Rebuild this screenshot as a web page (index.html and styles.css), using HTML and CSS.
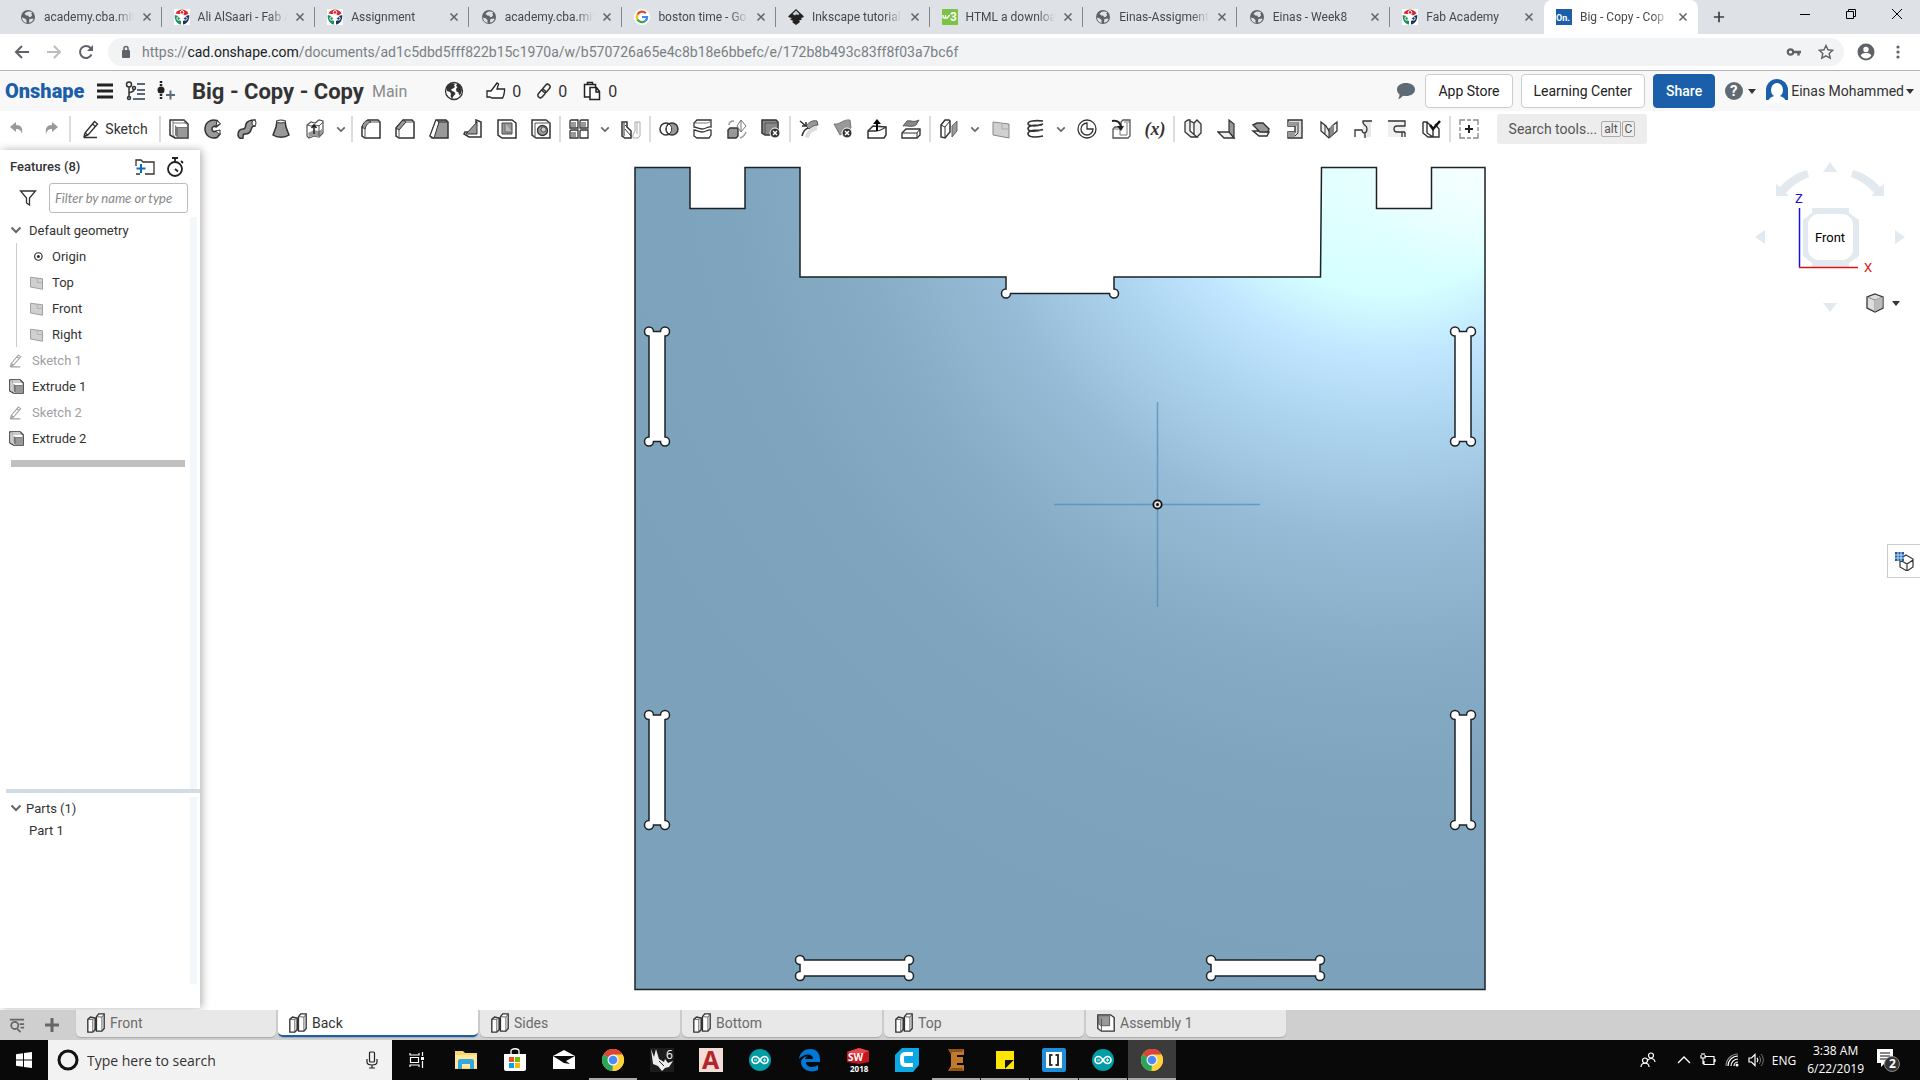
FILE: index.html
```html
<!DOCTYPE html>
<html lang="en">
<head>
    <meta charset="UTF-8">
    <meta name="viewport" content="width=device-width, initial-scale=1.0">
    <title>Big - Copy - Copy</title>
    <link rel="stylesheet" href="styles.css">
</head>
<body>
    <!-- shared icons -->
    <svg class="sprite" aria-hidden="true">
        <symbol id="i-globe" viewBox="0 0 16 16">
            <circle cx="8" cy="8" r="7" fill="#5f6368"/>
            <path d="M8.500 2.500c-2 .3-3.500 1.300-4 2.500l2 1.500 2 .2.500 1.500 2-.5 1.200-1.800-1-1.500 1-1.200c-1-.6-2.300-.9-3.700-.7zM2 8.500l3 1 1.500 1.500v3C4 13.500 2 11.500 2 8.500zM9.500 10l3-.5 1 .8c-.6 1.500-2 3-4 3.500l-.5-1.500z" fill="#dee1e6"/>
        </symbol>
        <symbol id="i-fab" viewBox="0 0 16 16">
            <rect width="16" height="16" fill="#fff"/>
            <path d="M1.500 4.500C3 1.500 6 .5 8 .5s5 1 6.500 4L11 6.500A3.500 3.500 0 0 0 8 5L4.500 5z" fill="#d9232e"/>
            <path d="M.8 6l3.400 1c-.3 3 .8 4 2.800 5v3.500C3 15 .2 11 .8 6z" fill="#1d8f5a"/>
            <path d="M15.200 6l-3.400 1c.3 3-.8 4-2.800 5v3.500c4-.5 6.800-4.500 6.200-9.500z" fill="#17375e"/>
            <circle cx="8" cy="3.400" r="1.800" fill="#d9232e" stroke="#fff"/>
            <circle cx="4.600" cy="9.500" r="1.700" fill="#1d8f5a" stroke="#fff"/>
            <circle cx="11.400" cy="9.500" r="1.700" fill="#17375e" stroke="#fff"/>
        </symbol>
        <symbol id="i-close" viewBox="0 0 10 10"><path d="M1.500 1.500l7 7M8.500 1.500l-7 7" stroke="#5f6368" stroke-width="1.500"/></symbol>
        <symbol id="i-chev" viewBox="0 0 12 8"><path d="M1.500 1.500L6 6l4.500-4.500" fill="none" stroke="#666" stroke-width="2"/></symbol>
        <symbol id="i-caret" viewBox="0 0 8 5"><path d="M0 0h8L4 5z" fill="#333"/></symbol>
        <symbol id="i-sketch" viewBox="0 0 20 20"><path d="M3 14L12.500 2.500l3 2.500L6 16l-4 1.500zM10.500 5l3 2.500M3 14l3 2M2 18.500h13" fill="none" stroke="currentColor" stroke-width="1.400"/></symbol>
        <symbol id="i-extrude" viewBox="0 0 20 20">
            <path d="M1 1h14l4 4v14H6l-5-3z" fill="#fff" stroke="#333" stroke-width="1.500"/>
            <path d="M4 1.500v14L6 18M4 4h12M15 1l1 3 3 2" fill="none" stroke="#777"/>
            <path d="M8 8l-2-2v10l2 2h10V8z" fill="#777"/><path d="M9 9h9v9H9z" fill="#999"/>
        </symbol>
        <symbol id="i-part" viewBox="0 0 22 22">
            <path d="M2 7l3-2.500 5 1v13L7.500 21H2zM11.500 4l2.500-3h6v16l-2.500 3h-6z" fill="#fff" stroke="#333" stroke-width="1.500"/>
            <path d="M2 7h5.500V21M7.500 7L10 5.500M11.500 4l6 .5V20M17.500 4.500L20 1" fill="none" stroke="#555"/>
        </symbol>
        <symbol id="i-plane" viewBox="0 0 20 20"><path d="M2 3l16 2v14L2 16z" fill="#d0d0d0" stroke="#888"/><path d="M11 4v6h7" fill="none" stroke="#aaa"/></symbol>
        <symbol id="i-chrome" viewBox="0 0 24 24">
            <circle cx="12" cy="12" r="11" fill="#fdd13a"/>
            <path d="M12 12L2.470 6.500A11 11 0 0 1 21.530 6.500z" fill="#db4437"/>
            <path d="M12 12L2.470 6.500A11 11 0 0 0 11.500 23z" fill="#2aa65a"/>
            <path d="M12 6.500h9.530A11 11 0 0 1 11.500 23l5-8.500z" fill="#fdd13a"/>
            <circle cx="12" cy="12" r="5.500" fill="#f4f4f4"/><circle cx="12" cy="12" r="4.300" fill="#4c8bf5"/>
        </symbol>
        <symbol id="i-arduino" viewBox="0 0 24 24">
            <circle cx="12" cy="12" r="11" fill="#009da5"/>
            <path d="M12 12c-2-3-3-3.500-4.500-3.500a3.500 3.500 0 0 0 0 7c1.500 0 2.500-.5 4.500-3.500s3-3.500 4.500-3.500a3.500 3.500 0 0 1 0 7c-1.500 0-2.500-.5-4.500-3.500z" fill="none" stroke="#fff" stroke-width="1.600"/>
            <path d="M6 12h3M15 12h3M16.500 10.500v3" stroke="#fff"/>
        </symbol>
    </svg>

    <!-- browser tabs -->
    <div class="tab-strip">
        <div class="tab"><svg class="favicon"><use href="#i-globe"/></svg><a href="#">academy.cba.mit.</a><button aria-label="Close tab"><svg><use href="#i-close"/></svg></button></div>
        <div class="tab"><svg class="favicon"><use href="#i-fab"/></svg><a href="#">Ali AlSaari - Fab A</a><button aria-label="Close tab"><svg><use href="#i-close"/></svg></button></div>
        <div class="tab"><svg class="favicon"><use href="#i-fab"/></svg><a href="#">Assignment</a><button aria-label="Close tab"><svg><use href="#i-close"/></svg></button></div>
        <div class="tab"><svg class="favicon"><use href="#i-globe"/></svg><a href="#">academy.cba.mit.</a><button aria-label="Close tab"><svg><use href="#i-close"/></svg></button></div>
        <div class="tab">
            <svg class="favicon" viewBox="0 0 16 16"><circle cx="8" cy="8" r="8" fill="#fff"/><g fill="none" stroke-width="2.200"><path d="M11.800 4.200A5.200 5.200 0 0 0 3.500 5.400" stroke="#ea4335"/><path d="M3.500 5.400a5.200 5.200 0 0 0 0 5.200" stroke="#fbbc05"/><path d="M3.500 10.600a5.200 5.200 0 0 0 8 1.200" stroke="#34a853"/><path d="M11.500 11.800A5 5 0 0 0 13.100 8H8" stroke="#4285f4"/></g></svg>
            <a href="#">boston time - Go</a><button aria-label="Close tab"><svg><use href="#i-close"/></svg></button>
        </div>
        <div class="tab">
            <svg class="favicon" viewBox="0 0 16 16"><path d="M8 0l7.500 7c.8 1-.5 1.700-2.500 2l1 1.500-3 1 1 1.500-4 3-4-3 1.500-1-3.500-1.500L4 9C1 8.800-.2 8 .5 7z" fill="#222"/><path d="M8 1.500l3.500 3.500-1.500 1-1.500-.8L7 6.500 4.500 5z" fill="#ccc"/></svg>
            <a href="#">Inkscape tutorial</a><button aria-label="Close tab"><svg><use href="#i-close"/></svg></button>
        </div>
        <div class="tab">
            <svg class="favicon" viewBox="0 0 16 16"><rect width="16" height="16" rx="1" fill="#7cc243"/><path d="M1 6v2c0 1.500 2.500 1.500 2.500 0V6v2c0 1.500 2.500 1.500 2.500 0 0-1 1-1.500 2-1.500" fill="none" stroke="#fff" stroke-width="1.300"/><text x="8" y="12" font-size="12" font-weight="bold" fill="#fff">3</text></svg>
            <a href="#">HTML a downloa</a><button aria-label="Close tab"><svg><use href="#i-close"/></svg></button>
        </div>
        <div class="tab"><svg class="favicon"><use href="#i-globe"/></svg><a href="#">Einas-Assigment</a><button aria-label="Close tab"><svg><use href="#i-close"/></svg></button></div>
        <div class="tab"><svg class="favicon"><use href="#i-globe"/></svg><a href="#">Einas - Week8</a><button aria-label="Close tab"><svg><use href="#i-close"/></svg></button></div>
        <div class="tab last"><svg class="favicon"><use href="#i-fab"/></svg><a href="#">Fab Academy</a><button aria-label="Close tab"><svg><use href="#i-close"/></svg></button></div>
        <div class="tab active">
            <svg class="favicon" viewBox="0 0 16 16"><rect width="16" height="16" fill="#1b5faa"/><text x="0" y="12" font-size="9" font-weight="bold" fill="#fff">On.</text></svg>
            <a href="#">Big - Copy - Cop</a><button aria-label="Close tab"><svg><use href="#i-close"/></svg></button>
        </div>
        <button class="new-tab" aria-label="New tab"><svg viewBox="0 0 14 14"><path d="M7 1v12M1 7h12" stroke="#3c4043" stroke-width="2"/></svg></button>
        <div class="window-controls">
            <button aria-label="Minimize"><svg viewBox="0 0 12 12"><path d="M1 6.500h10" stroke="#000"/></svg></button>
            <button aria-label="Restore"><svg viewBox="0 0 12 12"><path d="M1.500 3.500h7v7h-7zM3.500 3.500v-2h7v7h-2" fill="none" stroke="#000"/></svg></button>
            <button aria-label="Close"><svg viewBox="0 0 12 12"><path d="M1 1l10 10M11 1L1 11" stroke="#000"/></svg></button>
        </div>
    </div>

    <!-- address bar -->
    <div class="address-bar">
        <button aria-label="Back"><svg viewBox="0 0 16 16"><path d="M15 8H2M8 2L2 8l6 6" fill="none" stroke="#5f6368" stroke-width="2"/></svg></button>
        <button aria-label="Forward"><svg viewBox="0 0 16 16"><path d="M1 8h13M8 2l6 6-6 6" fill="none" stroke="#bdbdbd" stroke-width="2"/></svg></button>
        <button aria-label="Reload"><svg viewBox="0 0 16 16"><path d="M13.500 10.500A6 6 0 1 1 12.500 4" fill="none" stroke="#5f6368" stroke-width="2"/><path d="M15 1v6H9z" fill="#5f6368"/></svg></button>
        <div class="omnibox">
            <svg class="lock" viewBox="0 0 10 14"><rect x="1" y="5" width="8" height="8" rx="1" fill="#5f6368"/><path d="M3 6V3.500a2 2 0 0 1 4 0V6" fill="none" stroke="#5f6368" stroke-width="1.500"/></svg>
            <a class="url" href="#">https://<b>cad.onshape.com</b>/documents/ad1c5dbd5fff822b15c1970a/w/b570726a65e4c8b18e6bbefc/e/172b8b493c83ff8f03a7bc6f</a>
            <button aria-label="Passwords"><svg viewBox="0 0 16 16"><circle cx="4.500" cy="8" r="2.700" fill="none" stroke="#5f6368" stroke-width="2.200"/><path d="M7 8h8M12.500 8v3.500" stroke="#5f6368" stroke-width="2.500"/></svg></button>
            <button aria-label="Bookmark"><svg viewBox="0 0 16 16"><path d="M8 1.500l2 4.300 4.700.5-3.500 3.200 1 4.700L8 11.800l-4.200 2.400 1-4.700L1.300 6.300 6 5.800z" fill="none" stroke="#5f6368" stroke-width="1.400"/></svg></button>
        </div>
        <button aria-label="Profile"><svg class="profile" viewBox="0 0 18 18"><circle cx="9" cy="9" r="8.500" fill="#5f6368"/><circle cx="9" cy="6.500" r="2.700" fill="#fff"/><path d="M3.700 12.500c1-2 3-2.500 5.300-2.500s4.300.5 5.300 2.500C13 14.500 11 15.500 9 15.500s-4-1-5.300-3z" fill="#fff"/></svg></button>
        <button aria-label="Menu"><svg viewBox="0 0 16 16"><circle cx="8" cy="3" r="1.600" fill="#5f6368"/><circle cx="8" cy="8" r="1.600" fill="#5f6368"/><circle cx="8" cy="13" r="1.600" fill="#5f6368"/></svg></button>
    </div>

    <!-- document header -->
    <header class="doc-header">
        <a class="logo" href="#">Onshape</a>
        <button class="menu" aria-label="Menu"><svg viewBox="0 0 16 16"><path d="M0 2h16M0 8h16M0 14h16" stroke="#222" stroke-width="3"/></svg></button>
        <button aria-label="Versions"><svg viewBox="0 0 20 20"><g fill="none" stroke="#333" stroke-width="1.500"><circle cx="4" cy="3.500" r="2.500"/><path d="M4 6v10.500M4 13c0-3 5-1 5-4.500"/><circle cx="9" cy="7" r="1.500"/><circle cx="4" cy="17" r="1.500"/></g><path d="M12 3h8M12 9h8M12 13h8M8 18h12" stroke="#5b6a78" stroke-width="2"/></svg></button>
        <button aria-label="Insert version"><svg viewBox="0 0 20 20"><path d="M5 0v2M5 3v2M5 13v2M5 16v2" stroke="#222" stroke-width="2.500"/><circle cx="5" cy="9" r="3.500" fill="#222"/><path d="M10 14h9M14.500 9.500v9" stroke="#5b6a78" stroke-width="2"/></svg></button>
        <h1>Big - Copy - Copy</h1>
        <span class="branch">Main</span>
        <div class="stats">
            <svg viewBox="0 0 20 20"><circle cx="10" cy="10" r="8.500" fill="#fff" stroke="#333" stroke-width="1.300"/><path d="M8 2L4 3.500 2 7l1 3 3 1 1 2-.5 2L8 18l1.500-3 2-2-1-2-2.500-1-1-1.500 2-1L11 6l-1-1.500L11 3zM13 3l-1 2 1.500 1-1.500 2 .5 2.500 2 1 .5 3 2-2 1-4-1-3-2-2.500z" fill="#333"/></svg>
            <button><svg viewBox="0 0 20 20"><path d="M1 10h4l6-8 1.500 1L11 8h7.500v2l-.5 3-.5 2-1 2H6l-2-1H1z" fill="#fff" stroke="#222" stroke-width="1.300"/></svg>0</button>
            <button class="link-stat"><svg viewBox="0 0 16 16"><g fill="none" stroke="#333" stroke-width="1.500" transform="rotate(-50 8 8)"><rect x="0" y="5.500" width="9" height="5" rx="2.500"/><rect x="7" y="5.500" width="9" height="5" rx="2.500"/></g></svg>0</button>
            <button><svg viewBox="0 0 18 20"><path d="M7 16H1.500V3.500h11V6M4.500 3.500v-2h5v2M7 6.500h6.500l3 4v8H7zM13 7v4h3.500" fill="#fff" stroke="#222" stroke-width="1.500"/></svg>0</button>
        </div>
        <div class="header-right">
            <button class="icon-only" aria-label="Comments"><svg viewBox="0 0 20 20"><path d="M10 2c5 0 9 2.500 9 6.500S15 15 10 15c-1 0-2-.1-3-.3C5.500 16.500 3.500 18 2 18c1-1 1.500-3 1.500-4.500C2 12.300 1 10.500 1 8.500 1 4.500 5 2 10 2z" fill="#5f6b74"/></svg></button>
            <button class="btn">App Store</button>
            <button class="btn">Learning Center</button>
            <button class="btn primary">Share</button>
            <button class="icon-only" aria-label="Help"><svg viewBox="0 0 20 20"><circle cx="10" cy="10" r="9" fill="#5f6b74"/><text x="6" y="15" font-size="15" font-weight="bold" fill="#fff">?</text></svg><svg class="caret"><use href="#i-caret"/></svg></button>
            <button class="user"><svg viewBox="0 0 24 24"><path d="M1 21V11a11 11 0 0 1 22 0v10z" fill="#1b5faa"/><ellipse cx="12" cy="11" rx="6" ry="7" fill="#fff"/><path d="M3 24c0-5 4-6 6-7h6c2 1 6 2 6 7z" fill="#fff"/></svg>Einas Mohammed<svg class="caret"><use href="#i-caret"/></svg></button>
        </div>
    </header>

    <!-- feature toolbar -->
    <div class="toolbar">
        <button aria-label="Undo"><svg viewBox="0 0 20 20"><path d="M3 8l6-5v3c5 0 7 3 6 9-1-4-3-5-6-5v3z" fill="#999"/></svg></button>
        <button aria-label="Redo"><svg viewBox="0 0 20 20"><path d="M17 8l-6-5v3c-5 0-7 3-6 9 1-4 3-5 6-5v3z" fill="#999"/></svg></button>
        <span class="sep"></span>
        <button class="sketch"><svg><use href="#i-sketch"/></svg>Sketch</button>
        <span class="sep"></span>
        <button aria-label="Extrude"><svg><use href="#i-extrude"/></svg></button>
        <button aria-label="Revolve"><svg viewBox="0 0 20 20"><path d="M17 5l-3-3.500C7-.5 2 4 2 10s5 10.500 12 8.500l3-3.500-4-3c-2 1.500-4 0-4-2s2-3.500 4-2z" fill="#999" stroke="#333" stroke-width="1.500"/><path d="M14 2l-1 5 4-2M13 12l4-1v4" fill="#fff" stroke="#333"/></svg></button>
        <button aria-label="Sweep"><svg viewBox="0 0 20 20"><path d="M1 16c0-5 2-6 5-6 3 0 2-2 3-5s4-4 9-4v6c-3 0-3 1-4 4s-3 4-6 4c-2 0-2 1-2 4-2 1-5 0-5-3z" fill="#999" stroke="#333" stroke-width="1.500"/><ellipse cx="17" cy="4" rx="2" ry="3" fill="#fff" stroke="#333"/></svg></button>
        <button aria-label="Loft"><svg viewBox="0 0 20 20"><path d="M6 2h8l1 6 3 8c-4 3-12 3-16 0l3-8z" fill="#999" stroke="#333" stroke-width="1.500"/><ellipse cx="10" cy="2.500" rx="4" ry="1.500" fill="#fff" stroke="#333"/></svg></button>
        <button aria-label="Thicken"><svg viewBox="0 0 20 20"><path d="M2 6l4-3 4 1 4-3 4 1v12l-4 4-5-1-5 2-2-2z" fill="#fff" stroke="#555" stroke-width="1.200"/><path d="M3 14l6-3 5 1 3-2v4l-3 4-5-1-5 1z" fill="#999"/><path d="M14 6v11M2 6l4 1 4-1 4 1 4-4" fill="none" stroke="#555"/><path d="M9 6v9M6.500 9L9 6l2.500 3" fill="none" stroke="#222" stroke-width="1.500"/></svg></button>
        <button class="drop" aria-label="More"><svg><use href="#i-chev"/></svg></button>
        <span class="sep"></span>
        <button aria-label="Fillet"><svg viewBox="0 0 20 20"><path d="M1 8l6-7h10l2 2v16H4l-3-2z" fill="#fff" stroke="#333" stroke-width="1.500"/><path d="M1 8c1-4 3-6 6-7l3 2C6 4 5 7 4 10z" fill="#999" stroke="#333"/><path d="M4 9v10M9 3h10" stroke="#555"/></svg></button>
        <button aria-label="Chamfer"><svg viewBox="0 0 20 20"><path d="M1 9l7-8h9l2 2v16H4l-3-2z" fill="#fff" stroke="#333" stroke-width="1.500"/><path d="M1 9l7-8 3 2-7 8z" fill="#999" stroke="#333"/><path d="M4 10v9M10 3h9" stroke="#555"/></svg></button>
        <button aria-label="Draft"><svg viewBox="0 0 20 20"><path d="M7 1h10l2 2v16H3l-2-2z" fill="#999" stroke="#333" stroke-width="1.500"/><path d="M7 1l3 2-5 16-4-2z" fill="#fff" stroke="#333"/><path d="M9 3h9" stroke="#333"/></svg></button>
        <button aria-label="Rib"><svg viewBox="0 0 20 20"><path d="M13 1l5 2v15H6l-5-3 1-2h11z" fill="#fff" stroke="#333" stroke-width="1.500"/><path d="M14 3L3 15h11z" fill="#999" stroke="#333"/></svg></button>
        <button aria-label="Shell"><svg viewBox="0 0 20 20"><path d="M1 1h14l4 3v15H5l-4-3z" fill="#fff" stroke="#333" stroke-width="1.500"/><path d="M5 4h10v11H5z" fill="#999" stroke="#444"/><path d="M8 4v9h7" stroke="#666" fill="#bbb"/></svg></button>
        <button aria-label="Hole"><svg viewBox="0 0 20 20"><path d="M1 1h14l4 3v15H5l-4-3z" fill="#fff" stroke="#333" stroke-width="1.500"/><path d="M4 19V4h15" fill="none" stroke="#555"/><circle cx="11.500" cy="11.500" r="5" fill="#999" stroke="#333" stroke-width="1.300"/><circle cx="12.500" cy="10.500" r="2.500" fill="#ccc" stroke="#555"/></svg></button>
        <span class="sep"></span>
        <button aria-label="Pattern"><svg viewBox="0 0 20 20"><g fill="#fff" stroke="#333" stroke-width="1.300"><path d="M1 2l1-1h7v8H1zM11 2l1-1h7v8h-8zM1 12l1-1h7v8H1zM11 12l1-1h7v8h-8z"/></g><path d="M2 3h5v5H2zM12 3h5v5h-5zM2 13h5v5H2z" fill="#999"/></svg></button>
        <button class="drop" aria-label="More"><svg><use href="#i-chev"/></svg></button>
        <button aria-label="Mirror"><svg viewBox="0 0 20 20"><path d="M1 3h5v5l4 4v7H4l-3-2z" fill="#fff" stroke="#333" stroke-width="1.500"/><path d="M3 4v13M6 8l-2-2M4 10l6 7" fill="none" stroke="#333"/><path d="M19 3h-5v9l-2 3v4h5l2-2zM16 3v12" fill="#fff" stroke="#aaa"/></svg></button>
        <span class="sep"></span>
        <button aria-label="Boolean"><svg viewBox="0 0 20 20"><circle cx="7" cy="10" r="6" fill="#fff" stroke="#333" stroke-width="1.500"/><circle cx="13" cy="10" r="6" fill="#999" stroke="#333" stroke-width="1.500"/><path d="M10 5a6 6 0 0 1 0 10 6 6 0 0 1 0-10z" fill="#fff" stroke="#333"/></svg></button>
        <button aria-label="Split"><svg viewBox="0 0 20 20"><path d="M1 4l3-3h14v7c-3-1-5 2-9 2-4 0-5-2-8-2zM1 11c3 0 4 2 8 2s6-3 9-2v5l-2 3H4l-3-2z" fill="#fff" stroke="#333" stroke-width="1.300"/><path d="M2 4h13l3-2" fill="none" stroke="#777"/></svg></button>
        <button aria-label="Transform"><svg viewBox="0 0 20 20"><path d="M1 11l2-2h8v8l-2 2H1z" fill="#999" stroke="#333" stroke-width="1.400"/><path d="M14 1l5 6-5 6-4-6zM14 1v12" fill="#fff" stroke="#777"/><path d="M2 6c0-3 2-4 5-4M19 13c-1 3-3 5-6 6" fill="none" stroke="#999" stroke-width="1.500"/></svg></button>
        <button aria-label="Delete part"><svg viewBox="0 0 20 20"><path d="M1 1h14l2 2v13H4l-3-2z" fill="#888" stroke="#333" stroke-width="1.500"/><path d="M4 16V4h13" fill="none" stroke="#555"/><circle cx="14" cy="14" r="5" fill="#333" stroke="#fff"/><path d="M12 12l4 4M16 12l-4 4" stroke="#fff" stroke-width="1.500"/></svg></button>
        <span class="sep"></span>
        <button aria-label="Modify fillet"><svg viewBox="0 0 20 20"><path d="M6 18c1-6 5-10 12-11v4c-4 1-7 3-8 8z" fill="#ddd"/><path d="M7 7c3-4 7-6 11-5l1 4c-4 0-7 2-9 4z" fill="#999" stroke="#555"/><path d="M1 2l6 5M7 3v4H3M3 17c1-4 3-7 6-8" fill="none" stroke="#333" stroke-width="1.500"/></svg></button>
        <button aria-label="Delete face"><svg viewBox="0 0 20 20"><path d="M1 5c6 1 9-5 16-4l1 8-11 7z" fill="#999" stroke="#777"/><circle cx="14" cy="14" r="5" fill="#333" stroke="#fff"/><path d="M12 12l4 4M16 12l-4 4" stroke="#fff" stroke-width="1.500"/></svg></button>
        <button aria-label="Move face"><svg viewBox="0 0 20 20"><path d="M1 12l5-5 13 1v8l-2 3H1z" fill="#fff" stroke="#333" stroke-width="1.500"/><path d="M1 12h8c4 0 7-2 10-4" fill="none" stroke="#333" stroke-width="1.300"/><path d="M10 12V4" stroke="#000" stroke-width="2"/><path d="M6 5l4-5 4 5z"/></svg></button>
        <button aria-label="Replace face"><svg viewBox="0 0 20 20"><path d="M1 14l4-4h14v6l-3 3H1z" fill="#fff" stroke="#333" stroke-width="1.400"/><path d="M1 14h15l3-4M16 14v5" fill="none" stroke="#333"/><path d="M2 7l4-5c4-1 6 2 12-1l-3 5c-5 3-9 0-13 1z" fill="#888" stroke="#555"/></svg></button>
        <span class="sep"></span>
        <button aria-label="Offset surface"><svg viewBox="0 0 20 20"><path d="M2 6l4-5h4l1 1v11l-5 6-4-1z" fill="#fff" stroke="#333" stroke-width="1.500"/><path d="M6 8v11M6 8l5-6M2 6l4 2" stroke="#333"/><path d="M13 7l5-5v10l-5 6z" fill="#999" stroke="#666"/></svg></button>
        <button class="drop" aria-label="More"><svg><use href="#i-chev"/></svg></button>
        <button aria-label="Plane"><svg><use href="#i-plane"/></svg></button>
        <button aria-label="Helix"><svg viewBox="0 0 20 20"><path d="M18 2C10 1 3 2 3 4.500S10 8 18 5M17 6C10 6 3 6 3 9.500s8 3.500 15 1M17 11c-7 0-14 0-14 3.500S9 19 18 17" fill="none" stroke="#333" stroke-width="1.600"/></svg></button>
        <button class="drop" aria-label="More"><svg><use href="#i-chev"/></svg></button>
        <button aria-label="Curve"><svg viewBox="0 0 20 20"><circle cx="10" cy="10" r="9" fill="#fff" stroke="#333" stroke-width="1.300"/><path d="M10 4v6h6a6 6 0 1 1-6-6z" fill="none" stroke="#333" stroke-width="1.300"/></svg></button>
        <button aria-label="Derived"><svg viewBox="0 0 20 20"><path d="M2 10l2-2h6V3l2-2h7v16l-2 2H2z" fill="#fff" stroke="#555" stroke-width="1.300"/><path d="M2 10h7v6h7M13 3h6M16 16V4" fill="none" stroke="#777"/><path d="M1 2c5-1 8 1 9 6" fill="none" stroke="#222" stroke-width="2"/><path d="M6 7h7l-3 5z" fill="#222"/></svg></button>
        <button class="variable" aria-label="Variable">(x)</button>
        <span class="sep"></span>
        <button aria-label="Sheet metal"><svg viewBox="0 0 20 20"><path d="M2 3l3-2h2v11l7 6H8l-6-5zM7 2l4 2v11M11 4l3-3 4 4v9l-4 4" fill="#eee" stroke="#333" stroke-width="1.300"/></svg></button>
        <button aria-label="Flange"><svg viewBox="0 0 20 20"><path d="M12 1l5 4v14l-5-4z" fill="#999" stroke="#333" stroke-width="1.200"/><path d="M1 13h11l5 6H7z" fill="#eee" stroke="#333" stroke-width="1.400"/></svg></button>
        <button aria-label="Hem"><svg viewBox="0 0 20 20"><path d="M2 12h7l9 1-2 4H8z" fill="#eee" stroke="#333" stroke-width="1.400"/><path d="M2 6l4-2h6l6 6-1 3H9z" fill="#999" stroke="#333" stroke-width="1.400"/></svg></button>
        <button aria-label="Tab"><svg viewBox="0 0 20 20"><path d="M3 1h14v18H3v-6h7V7H3z" fill="#ddd" stroke="#333" stroke-width="1.400"/><path d="M3 3h9v4H3zM3 13h7v5H3z" fill="#999"/><path d="M13 3v11l-3 3" fill="none" stroke="#333"/></svg></button>
        <button aria-label="Bend"><svg viewBox="0 0 20 20"><path d="M2 3l5 4 3 5 3-5 5-4v9l-8 7-8-7z" fill="#eee" stroke="#333" stroke-width="1.300"/><path d="M10 9l5-4v9l-5 5z" fill="#888"/><path d="M6 6v9M10 9v10" stroke="#333"/></svg></button>
        <button aria-label="Corner"><svg viewBox="0 0 20 20"><path d="M10 2h8v16h-8z" fill="#e8e8e8"/><path d="M2 18v-7h7c0 4 5 4 5-1s-5-3-4-8h9M12 14v5" fill="none" stroke="#333" stroke-width="1.300"/></svg></button>
        <button aria-label="Bend relief"><svg viewBox="0 0 20 20"><path d="M1 1h17v17H1z" fill="#f0f0f0"/><path d="M1 2h17v5h-8c-4 0-4 6 0 6h5v5M18 13v5M14 13h4" fill="none" stroke="#333" stroke-width="1.300"/></svg></button>
        <button aria-label="Finish sheet metal"><svg viewBox="0 0 20 20"><path d="M2 3h4v11l6 4M2 3v11l5 4h11V10l-4-5M6 3l6 6v9" fill="none" stroke="#333" stroke-width="1.400"/><path d="M9 6l3 4 7-8" fill="none" stroke="#111" stroke-width="2.500"/></svg></button>
        <span class="sep"></span>
        <button aria-label="Add custom features"><svg viewBox="0 0 20 20"><path d="M1 6V1h5M8 1h4M14 1h5v5M19 8v4M19 14v5h-5M12 19H8M6 19H1v-5M1 12V8" fill="none" stroke="#888" stroke-width="1.300"/><path d="M10 6v8M6 10h8" stroke="#222" stroke-width="2"/></svg></button>
        <button class="search-tools">Search tools... <span class="keys"><kbd>alt</kbd><kbd>C</kbd></span></button>
    </div>

    <main class="workspace">
        <aside class="sidebar">
            <section class="features">
                <div class="panel-head">
                    <h2>Features (8)</h2>
                    <button aria-label="New folder"><svg viewBox="0 0 20 16"><path d="M1 7V1h5l2 2h11v12h-9M1 15h4" fill="none" stroke="#333" stroke-width="1.300"/><path d="M6 5v9M1.500 9.500h9" stroke="#0b6cbf" stroke-width="2"/></svg></button>
                    <button aria-label="Rebuild time"><svg viewBox="0 0 18 20"><circle cx="9" cy="12" r="7" fill="none" stroke="#222" stroke-width="1.800"/><path d="M6 1h6M9 1v4M15 4l2 2M9 12l3 2.500" stroke="#222" stroke-width="1.800"/></svg></button>
                </div>
                <div class="filter">
                    <svg viewBox="0 0 18 18"><path d="M1.500 2h15l-6 7v7l-3-2V9z" fill="none" stroke="#333" stroke-width="1.300"/></svg>
                    <input type="text" aria-label="Filter" placeholder="Filter by name or type">
                </div>
                <div class="scroll">
                    <button class="group-head"><svg><use href="#i-chev"/></svg>Default geometry</button>
                    <ul class="geometry">
                        <li><svg viewBox="0 0 16 16"><circle cx="10" cy="8" r="4" fill="none" stroke="#333" stroke-width="1.300"/><circle cx="10" cy="8" r="1.600" fill="#333"/></svg>Origin</li>
                        <li><svg><use href="#i-plane"/></svg>Top</li>
                        <li><svg><use href="#i-plane"/></svg>Front</li>
                        <li><svg><use href="#i-plane"/></svg>Right</li>
                    </ul>
                    <ul class="feature-list">
                        <li class="muted"><svg><use href="#i-sketch"/></svg>Sketch 1</li>
                        <li><svg><use href="#i-extrude"/></svg>Extrude 1</li>
                        <li class="muted"><svg><use href="#i-sketch"/></svg>Sketch 2</li>
                        <li><svg><use href="#i-extrude"/></svg>Extrude 2</li>
                    </ul>
                    <div class="rollback"></div>
                </div>
            </section>
            <section class="parts">
                <div class="scroll">
                    <button class="group-head"><svg><use href="#i-chev"/></svg>Parts (1)</button>
                    <p>Part 1</p>
                </div>
            </section>
        </aside>

        <div class="viewport">
            <svg class="model" viewBox="200 150 1720 860">
                <defs>
                    <radialGradient id="shade" gradientUnits="userSpaceOnUse" cx="1388" cy="116" r="900">
                        <stop offset="0" stop-color="#eaffff"/>
                        <stop offset=".1" stop-color="#e4ffff"/>
                        <stop offset=".195" stop-color="#d5ffff"/>
                        <stop offset=".27" stop-color="#bfe5ff"/>
                        <stop offset=".35" stop-color="#add4ee"/>
                        <stop offset=".47" stop-color="#96bbd6"/>
                        <stop offset=".6" stop-color="#87adc6"/>
                        <stop offset=".74" stop-color="#7fa5be"/>
                        <stop offset="1" stop-color="#7ba2ba"/>
                    </radialGradient>
                    <radialGradient id="glow" gradientUnits="userSpaceOnUse" cx="1490" cy="160" r="130">
                        <stop offset="0" stop-color="#fff" stop-opacity=".8"/>
                        <stop offset="1" stop-color="#fff" stop-opacity="0"/>
                    </radialGradient>
                    <path id="plate" fill-rule="evenodd" d="M635 167.500H690V208.500H745V167.500H800V277H1006V289A4.500 4.500 0 1 0 1010.500 293.500H1109.500A4.500 4.500 0 1 0 1114 289V277H1320.500L1321.500 167.500H1376.500V208.500H1431.500V167.500H1485V989.500H635z
                        M653.500 331.500h7a4.500 4.500 0 1 1 4.500 4.500v101a4.500 4.500 0 1 1-4.500 4.500h-7a4.500 4.500 0 1 1-4.500-4.500v-101a4.500 4.500 0 1 1 4.500-4.500z
                        M653.500 715h7a4.500 4.500 0 1 1 4.500 4.500v101a4.500 4.500 0 1 1-4.500 4.500h-7a4.500 4.500 0 1 1-4.500-4.500v-101a4.500 4.500 0 1 1 4.500-4.500z
                        M1459.500 331.500h7a4.500 4.500 0 1 1 4.500 4.500v101a4.500 4.500 0 1 1-4.500 4.500h-7a4.500 4.500 0 1 1-4.500-4.500v-101a4.500 4.500 0 1 1 4.500-4.500z
                        M1459.500 715h7a4.500 4.500 0 1 1 4.500 4.500v101a4.500 4.500 0 1 1-4.500 4.500h-7a4.500 4.500 0 1 1-4.500-4.500v-101a4.500 4.500 0 1 1 4.500-4.500z
                        M804.500 960h100a4.500 4.500 0 1 1 4.500 4.500v7a4.500 4.500 0 1 1-4.500 4.500h-100a4.500 4.500 0 1 1-4.500-4.500v-7a4.500 4.500 0 1 1 4.500-4.500z
                        M1215.500 960h100a4.500 4.500 0 1 1 4.500 4.500v7a4.500 4.500 0 1 1-4.500 4.500h-100a4.500 4.500 0 1 1-4.500-4.500v-7a4.500 4.500 0 1 1 4.500-4.500z"/>
                </defs>
                <use href="#plate" fill="url(#shade)"/>
                <use href="#plate" fill="url(#glow)" stroke="#1c2226" stroke-width="1.500"/>
                <path d="M1054 504.500h206M1157.500 402v205" stroke="#4c8bb9" stroke-opacity=".7" stroke-width="1.500"/>
                <circle cx="1157.500" cy="504.500" r="4.200" fill="#ddd" stroke="#111" stroke-width="1.800"/>
                <circle cx="1157.500" cy="504.500" r="1.500" fill="#111"/>
            </svg>

            <div class="view-cube">
                <svg viewBox="0 0 160 160">
                    <g fill="#e2e9ef">
                        <path d="M80 2l7 10H73zM80 152l7-9H73zM5 77l10-7v14zM155 77l-10-7v14z"/>
                        <path d="M57 10l2 7C49 21 41 27 36 33l3 3H26V24l4 3c7-8 16-14 27-17zM103 10l-2 7c10 4 18 10 23 16l-3 3h13V24l-4 3c-7-8-16-14-27-17z"/>
                        <path d="M62 48h37v5l10 7v36l-10 7v5H62v-5l-9-7V60l9-7z"/>
                    </g>
                    <rect x="58" y="54" width="45" height="46" rx="11" fill="#fff"/>
                    <path d="M49.500 107V48" stroke="#1414dc" stroke-width="1.500"/>
                    <path d="M49 107.500h59" stroke="#dc1414" stroke-width="1.500"/>
                    <text x="80" y="82" text-anchor="middle">Front</text>
                    <text x="45" y="43" fill="#1414dc">Z</text>
                    <text x="114" y="112" fill="#dc1414">X</text>
                </svg>
                <button aria-label="Display style"><svg viewBox="0 0 20 20"><path d="M10 1l8 3v11l-8 4-8-4V4z" fill="#ddd" stroke="#333" stroke-width="1.300"/><path d="M2 4l8 3 8-3M10 7v12" fill="none" stroke="#888"/><path d="M10 7l7.500-2.500v10L10 18z" fill="#bbb"/></svg><svg class="caret"><use href="#i-caret"/></svg></button>
            </div>
            <button class="side-tab" aria-label="Configurations"><svg viewBox="0 0 20 20"><path d="M12 4l7 4v8l-6 4-7-4V8zM6 9l7 4 6-4M13 13v7" fill="#fff" stroke="#333" stroke-width="1.200"/><path d="M1 1h9v9H1z" fill="#1b5faa"/><path d="M4 1v9M7 1v9M1 4h9M1 7h9" stroke="#cde"/></svg></button>
        </div>
    </main>

    <!-- document tabs -->
    <nav class="doc-tabs">
        <button aria-label="Tab manager"><svg viewBox="0 0 18 18"><path d="M1 3h16M12 8h5M13 12h4" stroke="#666" stroke-width="2"/><circle cx="6.500" cy="9.500" r="4" fill="none" stroke="#666" stroke-width="2"/><path d="M9 13l4 4" stroke="#666" stroke-width="2"/></svg></button>
        <button aria-label="Add tab"><svg viewBox="0 0 16 16"><path d="M8 1v14M1 8h14" stroke="#666" stroke-width="3"/></svg></button>
        <a href="#"><svg><use href="#i-part"/></svg>Front</a>
        <a href="#" class="active"><svg><use href="#i-part"/></svg>Back</a>
        <a href="#"><svg><use href="#i-part"/></svg>Sides</a>
        <a href="#"><svg><use href="#i-part"/></svg>Bottom</a>
        <a href="#"><svg><use href="#i-part"/></svg>Top</a>
        <a href="#"><svg viewBox="0 0 22 22"><path d="M2 2h14l4 3v15H6l-4-3z" fill="#fff" stroke="#333" stroke-width="1.500"/><path d="M3 3h12v11H5l-2-2z" fill="#999" stroke="#555"/><path d="M6 20V6" stroke="#555"/></svg>Assembly 1</a>
    </nav>

    <!-- windows taskbar -->
    <footer class="taskbar">
        <button aria-label="Start"><svg class="start" viewBox="0 0 16 16"><path d="M0 2.300l7-1v6.200H0zM8 1.100L16 0v7.500H8zM0 8.500h7v6.200l-7-1zM8 8.500h8V16l-8-1.100z" fill="#fff"/></svg></button>
        <label class="search">
            <svg viewBox="0 0 22 22"><circle cx="11" cy="11" r="9" fill="none" stroke="#111" stroke-width="3"/></svg>
            <input type="text" placeholder="Type here to search">
            <svg class="mic" viewBox="0 0 12 18"><rect x="3.500" y="1" width="5" height="10" rx="1" fill="none" stroke="#222" stroke-width="1.200"/><path d="M1 8v3c0 4 10 4 10 0V8M6 14v3M3 17h6" fill="none" stroke="#222" stroke-width="1.200"/></svg>
        </label>
        <div class="apps">
            <button aria-label="Task view"><svg class="glyph" viewBox="0 0 16 16"><path d="M1 1v2h9V1M1.500 5.500h8v5h-8zM1 15v-2h9v2M13.500 0v4M13.500 9v7" fill="none" stroke="#fff" stroke-width="1.200"/><path d="M12 5h3v3h-3z" fill="#fff"/></svg></button>
            <button aria-label="File Explorer"><svg viewBox="0 0 24 24"><path d="M1 3h8l2 2h12v16H1z" fill="#f7d774"/><path d="M1 7h22v13H1z" fill="#ffe89a"/><path d="M4 21v-8c0-1 1-2 2-2h12c1 0 2 1 2 2v8h-4v-5H8v5z" fill="#35a7e0"/></svg></button>
            <button aria-label="Store"><svg viewBox="0 0 24 24"><path d="M8 6V3c0-3 8-3 8 0v3" fill="none" stroke="#fff" stroke-width="1.300"/><path d="M1 6h22v15c0 1-1 2-2 2H3c-1 0-2-1-2-2z" fill="#fff"/><path d="M6 9h5v5H6z" fill="#f25022"/><path d="M12 9h5v5h-5z" fill="#7fba00"/><path d="M6 15h5v5H6z" fill="#00a4ef"/><path d="M12 15h5v5h-5z" fill="#ffb900"/></svg></button>
            <button aria-label="Mail"><svg viewBox="0 0 24 24"><path d="M1 8l11-6 11 6v13H1z" fill="#fff"/><path d="M1 8h22l-9 5 4 3-6-1z" fill="#0a0a0a"/></svg></button>
            <button aria-label="Chrome" class="open"><svg><use href="#i-chrome"/></svg></button>
            <button aria-label="Rhino"><svg viewBox="0 0 24 24"><rect width="24" height="24" fill="#1c1c1c"/><path d="M1 1l3 8 2-8 3 10 5 3 1-3 3 4 5-2-4 6-4 1-3 3-4-5-5-2z" fill="#eee"/><path d="M9 13l5 5" stroke="#222"/><text x="16" y="11" font-size="12" fill="#fff">6</text></svg></button>
            <button aria-label="AutoCAD"><svg viewBox="0 0 24 24"><rect width="24" height="24" fill="#f3ddd8"/><text x="3" y="21" font-size="25" font-weight="bold" fill="#b3252c">A</text></svg></button>
            <button aria-label="Arduino"><svg><use href="#i-arduino"/></svg></button>
            <button aria-label="Edge"><svg viewBox="0 0 24 24"><path d="M2 11C3 4 8 1 13 1c7 0 10 5 10 10v3H9c0 6 8 6 12 3v5c-6 3-16 1-17-7 0-4 3-6 6-7-1 1-2 3-2 3h8c0-6-9-6-14 0z" fill="#0078d7"/></svg></button>
            <button aria-label="SolidWorks"><svg viewBox="0 0 24 24"><path d="M1 4l12-4 10 3v11l-10 2-12-2z" fill="#c4161c"/><path d="M1 4l12-4 10 3-11 4z" fill="#e5484d"/><text x="2" y="13" font-size="10" font-weight="bold" fill="#fff">SW</text><text x="4" y="24" font-size="8" font-weight="bold" fill="#fff">2018</text></svg></button>
            <button aria-label="Cura"><svg viewBox="0 0 24 24"><path d="M7 0h17v17l-6 7H0V7z" fill="#0ca8e6"/><path d="M18 6h-7c-4 0-4 1-4 5s0 6 4 6h7" fill="none" stroke="#fff" stroke-width="4"/></svg></button>
            <button aria-label="Eagle" class="open"><svg viewBox="0 0 24 24"><path d="M4 1h16v6h-7v2h6v6h-6v2h7v6H4l3-5V6z" fill="#c07a2b"/><path d="M4 1h16l-2 3H8l-1 2zM4 23h16l-2-3H8z" fill="#8f5418"/></svg></button>
            <button aria-label="Sticky Notes" class="open"><svg viewBox="0 0 24 24"><path d="M3 3h18v18H3z" fill="#ffe600"/><path d="M12 12h9l-9 9z" fill="#111"/><path d="M21 12v9h-9z" fill="#ffe600"/></svg></button>
            <button aria-label="Brackets" class="open"><svg viewBox="0 0 24 24"><rect width="24" height="24" rx="2" fill="#1c8dd6"/><rect x="4" y="4" width="16" height="16" fill="#fff"/><path d="M10.500 7H8v10h2.500M13.500 7H16v10h-2.500" fill="none" stroke="#333" stroke-width="2"/></svg></button>
            <button aria-label="Arduino" class="open"><svg><use href="#i-arduino"/></svg></button>
            <button aria-label="Chrome" class="open current"><svg><use href="#i-chrome"/></svg></button>
        </div>
        <div class="tray">
            <svg class="people" viewBox="0 0 16 16"><g fill="none" stroke="#fff" stroke-width="1.200"><circle cx="11" cy="3.500" r="2.500"/><circle cx="5" cy="8.500" r="2.500"/><path d="M1 15c0-5 8-5 8 0M8 8c3-3 7-1 7 2"/></g></svg>
            <svg viewBox="0 0 16 16"><path d="M2 11l6-6 6 6" fill="none" stroke="#fff" stroke-width="1.300"/></svg>
            <svg viewBox="0 0 16 16"><path d="M5 4.500h9v8H4V9M1 3v3h4V3M2 1v2M4 1v2M3 6v6M15 7v3" fill="none" stroke="#fff" stroke-width="1.200"/></svg>
            <svg viewBox="0 0 16 16"><g fill="none" stroke="#fff" stroke-width="1.200"><path d="M10 14a4 4 0 0 1 4-4M7 14a7 7 0 0 1 7-7M4 14A10 10 0 0 1 14 4" /><path d="M2 14A12 12 0 0 1 14 2" stroke="#888"/></g><circle cx="13" cy="13" r="1.500" fill="#fff"/></svg>
            <svg viewBox="0 0 16 16"><path d="M1 6h2.500L7 2.500v11L3.500 10H1zM9 6c1 1 1 3 0 4" fill="none" stroke="#fff" stroke-width="1.200"/><path d="M11 4c2 2 2 6 0 8M13 2c3 3 3 9 0 12" fill="none" stroke="#777"/></svg>
            <span>ENG</span>
            <time>3:38 AM<br>6/22/2019</time>
            <button aria-label="Notifications"><svg viewBox="0 0 24 24"><path d="M1 1h16v14H9l-4 4v-4H1z" fill="#fff"/><path d="M4 5h10M4 8h10M4 11h7" stroke="#111"/><circle cx="16" cy="16" r="7.500" fill="#333" stroke="#888"/><text x="13" y="20" font-size="12" font-weight="bold" fill="#fff">2</text></svg></button>
        </div>
    </footer>
</body>
</html>
```
FILE: styles.css
```css
* {
    box-sizing: border-box;
}

body {
    margin: 0;
    height: 100vh;
    display: flex;
    flex-direction: column;
    overflow: hidden;
    font-family: Roboto, sans-serif;
    font-size: 14px;
    color: #333;
    background: #fff;
}

button {
    display: flex;
    align-items: center;
    justify-content: center;
    padding: 0;
    border: none;
    background: none;
    color: inherit;
    font: inherit;
    cursor: pointer;
}

a {
    color: inherit;
    text-decoration: none;
}

svg {
    flex: none;
    width: 20px;
    height: 20px;
}

.sprite {
    position: absolute;
    width: 0;
    height: 0;
}

.caret {
    width: 8px;
    height: 5px;
}

/* browser tabs */
.tab-strip {
    display: flex;
    height: 34px;
    padding-left: 8px;
    background: #dee1e6;
    font-size: 12px;
}

.tab {
    display: flex;
    align-items: center;
    gap: 8px;
    width: 8vw;
    padding: 0 10px 0 12px;
    background: linear-gradient(#80868b, #80868b) right center / 1px 20px no-repeat;
}

.tab.last {
    background: none;
}

.tab.active {
    border-radius: 8px 8px 0 0;
    background: #fff;
}

.tab a {
    flex: 1;
    min-width: 0;
    white-space: nowrap;
    color: #45494d;
    -webkit-mask-image: linear-gradient(to right, #000 80%, transparent);
    mask-image: linear-gradient(to right, #000 80%, transparent);
}

.tab .favicon {
    width: 16px;
    height: 16px;
}

.tab button svg {
    width: 10px;
    height: 10px;
}

.new-tab {
    width: 42px;
}

.new-tab svg {
    width: 12px;
    height: 12px;
}

.window-controls {
    display: flex;
    margin-left: auto;
    height: 28px;
}

.window-controls button {
    width: 46px;
}

.window-controls svg {
    width: 12px;
    height: 12px;
}

/* address bar */
.address-bar {
    display: flex;
    align-items: center;
    height: 37px;
    padding: 0 6px;
    border-bottom: 1px solid #b5b5b5;
}

.address-bar button {
    width: 32px;
}

.address-bar svg {
    width: 16px;
    height: 16px;
}

.address-bar .profile {
    width: 18px;
    height: 18px;
}

.omnibox {
    flex: 1;
    display: flex;
    align-items: center;
    height: 28px;
    margin: 0 6px;
    padding: 0 2px 0 12px;
    border-radius: 14px;
    background: #f1f3f4;
}

.omnibox .lock {
    width: 12px;
    height: 14px;
}

.url {
    flex: 1;
    margin-left: 10px;
    color: #7a7f84;
}

.url b {
    font-weight: normal;
    color: #202124;
}

/* document header */
.doc-header {
    display: flex;
    align-items: center;
    height: 40px;
    padding: 0 6px 0 5px;
    background: #f8f8f8;
}

.logo {
    width: 92px;
    font-size: 20px;
    font-weight: 900;
    color: #1b5faa;
}

.doc-header .menu {
    margin-right: 12px;
}

.doc-header .menu svg {
    width: 16px;
    height: 16px;
}

.doc-header > button {
    margin-right: 11px;
}

.doc-header h1 {
    margin: 0 8px 0 5px;
    font-size: 22px;
    font-weight: 700;
}

.branch {
    font-size: 16px;
    color: #8a8a8a;
}

.stats {
    display: flex;
    align-items: center;
    gap: 15px;
    margin-left: 37px;
    font-size: 16px;
}

.stats > svg {
    margin-right: 7px;
}

.stats button {
    gap: 6px;
}

.stats .link-stat svg {
    width: 16px;
    height: 16px;
}

.header-right {
    display: flex;
    align-items: center;
    gap: 8px;
    margin-left: auto;
}

.btn {
    height: 34px;
    padding: 0 12px;
    border: 1px solid #ccc;
    border-radius: 4px;
    background: #fff;
    color: #222;
}

.btn.primary {
    border-color: #1b5faa;
    background: #1b5faa;
    color: #fff;
    font-weight: 500;
}

.icon-only {
    gap: 4px;
    margin: 0 1px;
}

.user {
    gap: 2px;
}

.user svg:first-child {
    width: 24px;
    height: 24px;
}

/* feature toolbar */
.toolbar {
    display: flex;
    align-items: center;
    height: 39px;
    padding-bottom: 3px;
    background: #fff;
}

.toolbar button {
    width: 34px;
    height: 30px;
}

.toolbar .drop {
    width: 18px;
}

.toolbar .drop svg {
    width: 10px;
    height: 7px;
}

.toolbar .sketch {
    width: 86px;
    gap: 3px;
}

.toolbar .sep {
    width: 2px;
    height: 26px;
    margin: 0 1px;
    background: #dcdcdc;
}

.toolbar .variable {
    font-family: "Liberation Serif", serif;
    font-size: 18px;
    font-style: italic;
    font-weight: bold;
}

.toolbar .search-tools {
    width: 150px;
    gap: 4px;
    margin-left: 11px;
    border-radius: 3px;
    background: #ededed;
    color: #555;
}

.keys {
    display: flex;
    gap: 1px;
}

.keys kbd {
    padding: 0 2px;
    border: 1px solid #aaa;
    border-radius: 2px;
    font-family: Roboto, sans-serif;
    font-size: 12px;
}

/* workspace */
.workspace {
    flex: 1;
    display: flex;
    min-height: 0;
}

.sidebar {
    display: flex;
    flex-direction: column;
    width: 200px;
    margin-bottom: 2px;
    background: #fff;
    box-shadow: 2px 0 8px rgba(0, 0, 0, 0.3);
    font-size: 13px;
}

.features {
    flex: 1;
    display: flex;
    flex-direction: column;
}

.panel-head {
    display: flex;
    align-items: center;
    gap: 10px;
    height: 33px;
    padding: 0 15px 0 10px;
}

.panel-head h2 {
    flex: 1;
    margin: 0;
    font-size: 13px;
    font-weight: 500;
}

.filter {
    display: flex;
    align-items: center;
    gap: 12px;
    margin-bottom: 4px;
    padding: 0 12px 0 19px;
}

.filter svg {
    width: 18px;
    height: 18px;
}

.filter input {
    flex: 1;
    min-width: 0;
    height: 30px;
    padding: 0 5px;
    border: 1px solid #bbb;
    border-radius: 3px;
    font: italic 13px Lato, sans-serif;
}

.filter input::placeholder {
    color: #888;
}

.scroll {
    flex: 1;
    margin-right: 3px;
    border-right: 7px solid #f2f7fc;
}

.group-head {
    gap: 7px;
    height: 26px;
    padding-left: 10px;
}

.group-head svg {
    width: 12px;
    height: 8px;
}

.scroll ul {
    margin: 0;
    padding: 0 0 0 9px;
    list-style: none;
}

.scroll li {
    display: flex;
    align-items: center;
    gap: 8px;
    height: 26px;
}

.scroll li svg {
    width: 15px;
    height: 15px;
}

.scroll .geometry {
    margin-left: 16px;
    padding-left: 12px;
    border-left: 1px solid #ccc;
}

.muted {
    color: #a0a0a0;
}

.rollback {
    height: 7px;
    margin: 9px 5px 0 11px;
    background: #c0c0c0;
}

.parts {
    display: flex;
    height: 219px;
    margin-left: 6px;
    padding: 4px 0 24px;
    border-top: 4px solid #d0dde7;
}

.parts .group-head {
    padding-left: 4px;
    gap: 4px;
    height: 22px;
}

.parts p {
    margin: 0;
    padding-left: 23px;
    line-height: 24px;
}

.viewport {
    position: relative;
    flex: 1;
}

.model {
    display: block;
    width: 100%;
    height: 100%;
}

.view-cube {
    position: absolute;
    top: 10px;
    right: 10px;
    width: 160px;
}

.view-cube > svg {
    display: block;
    width: 160px;
    height: 160px;
    font-size: 13px;
}

.view-cube button {
    position: absolute;
    right: 10px;
    bottom: -3px;
    gap: 7px;
    height: 40px;
}

.side-tab {
    position: absolute;
    top: 394px;
    right: 0;
    width: 33px;
    height: 34px;
    border: 1px solid #ccc;
    border-right: none;
    background: #fff;
}

/* document tabs */
.doc-tabs {
    display: flex;
    height: 30px;
    background: #cfcfcf;
}

.doc-tabs button {
    width: 36px;
}

.doc-tabs button:first-child {
    width: 34px;
}

.doc-tabs button svg {
    width: 16px;
    height: 16px;
}

.doc-tabs a {
    display: flex;
    align-items: center;
    gap: 4px;
    width: 200px;
    height: 27px;
    margin-left: 2px;
    padding: 0 0 2px 10px;
    border-radius: 0 0 5px 5px;
    background: #e8e8e8;
    box-shadow: 0 1px 1px #aaa;
    color: #6b6b6b;
}

.doc-tabs button + a {
    margin-left: 6px;
}

.doc-tabs .active {
    padding-bottom: 0;
    border-bottom: 2px solid #1b5faa;
    background: #fff;
    color: #333;
}

/* taskbar */
.taskbar {
    display: flex;
    height: 40px;
    background: #090909;
    color: #fff;
    font-family: "Open Sans", sans-serif;
}

.taskbar > button {
    width: 48px;
}

.start {
    width: 16px;
    height: 16px;
}

.search {
    display: flex;
    align-items: center;
    gap: 8px;
    width: 344px;
    padding: 0 14px 0 9px;
    background: #f2f2f2;
}

.search svg {
    width: 22px;
    height: 22px;
}

.search .mic {
    width: 12px;
    height: 18px;
}

.search input {
    flex: 1;
    min-width: 0;
    padding: 0;
    border: none;
    outline: none;
    background: none;
    font: 14px "Open Sans", sans-serif;
}

.search input::placeholder {
    color: #333;
}

.apps {
    display: flex;
    gap: 1px;
    margin-left: 1px;
}

.apps button {
    width: 48px;
    border-top: 2px solid transparent;
    border-bottom: 2px solid transparent;
}

.apps svg {
    width: 24px;
    height: 24px;
}

.apps .glyph {
    width: 16px;
    height: 16px;
}

.apps .open {
    border-bottom-color: #a9a9a9;
}

.apps .current {
    border-top-color: #3b3b3b;
    background: #3b3b3b;
}

.tray {
    display: flex;
    align-items: center;
    gap: 8px;
    margin-left: auto;
    padding-right: 20px;
    font-size: 12px;
}

.tray svg {
    width: 16px;
    height: 16px;
}

.tray .people {
    margin-right: 12px;
}

.tray time {
    margin: 0 4px 0 3px;
    line-height: 18px;
    text-align: center;
}

.tray button svg {
    width: 24px;
    height: 24px;
}
```
